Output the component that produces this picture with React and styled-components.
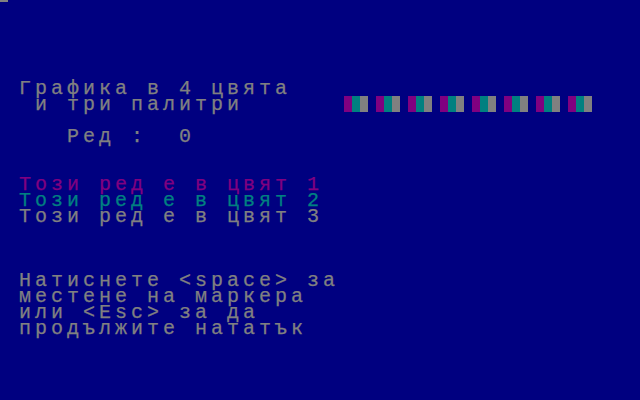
import React from "react";
import styled, { createGlobalStyle } from "styled-components";

const Global = createGlobalStyle`
  html, body { margin: 0; padding: 0; background: #000080; }
`;

const Screen = styled.div`
  position: relative;
  width: 640px;
  height: 400px;
  background: #000080;
  overflow: hidden;
  display: grid;
  grid-template-rows: repeat(25, 16px);
  font-family: "Liberation Mono", "DejaVu Sans Mono", monospace;
  font-size: 20px;
  line-height: 16px;
  color: #808080;
`;

const Cursor = styled.div`
  position: absolute;
  top: 0;
  left: 0;
  width: 8px;
  height: 2px;
  background: #808080;
`;

const Row = styled.div`
  grid-row: ${({ row }) => row + 1};
  display: flex;
  align-items: flex-start;
  height: 16px;
`;

const Text = styled.span`
  display: block;
  padding-left: ${({ col }) => col * 16 + 3}px;
  padding-top: 1px;
  white-space: pre;
  letter-spacing: 4px;
  -webkit-text-stroke: 0.25px ${({ tone }) => tone || "#808080"};
  color: ${({ tone }) => tone || "#808080"};
`;

const Palette = styled.div`
  margin-left: auto;
  margin-right: 48px;
  display: flex;
  gap: 8px;
`;

const Swatch = styled.div`
  display: flex;
  height: 16px;
`;

const Stripe = styled.div`
  width: 8px;
  height: 16px;
  background: ${({ tone }) => tone};
`;

const colors = ["#800080", "#008080", "#808080"];

export default function App() {
  return (
    <>
      <Global />
      <Screen>
        <Cursor />
        <Row row={5}>
          <Text col={1}>Графика в 4 цвята</Text>
        </Row>
        <Row row={6}>
          <Text col={2}>и три палитри</Text>
          <Palette>
            {Array.from({ length: 8 }).map((_, i) => (
              <Swatch key={i}>
                {colors.map((c) => (
                  <Stripe key={c} tone={c} />
                ))}
              </Swatch>
            ))}
          </Palette>
        </Row>
        <Row row={8}>
          <Text col={4}>Ред :  0</Text>
        </Row>
        <Row row={11}>
          <Text col={1} tone="#800080">Този ред е в цвят 1</Text>
        </Row>
        <Row row={12}>
          <Text col={1} tone="#008080">Този ред е в цвят 2</Text>
        </Row>
        <Row row={13}>
          <Text col={1}>Този ред е в цвят 3</Text>
        </Row>
        <Row row={17}>
          <Text col={1}>Натиснете &lt;space&gt; за</Text>
        </Row>
        <Row row={18}>
          <Text col={1}>местене на маркера</Text>
        </Row>
        <Row row={19}>
          <Text col={1}>или &lt;Esc&gt; за да</Text>
        </Row>
        <Row row={20}>
          <Text col={1}>продължите нататък</Text>
        </Row>
      </Screen>
    </>
  );
}
